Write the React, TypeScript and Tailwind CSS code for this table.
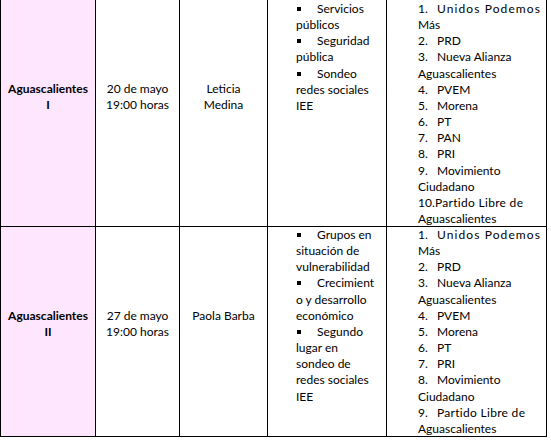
import React from "react";

function Bullet() {
  return (
    <span className="inline-block w-[21px]">
      <span className="inline-block w-[4px] h-[4px] bg-black ml-[1px] mb-[2px]"></span>
    </span>
  );
}

function Num({ n }: { n: string }) {
  return <span className="inline-block w-[19px] tracking-normal">{n}</span>;
}

function Num10() {
  return <span className="inline-block w-[17px]">10.</span>;
}

export default function App() {
  return (
    <div className="w-[551px] h-[440px] bg-white font-[Lato,sans-serif] text-[12px] leading-[16.15px] text-black">
      {/* Row 1 */}
      <div className="flex h-[227px] w-[547px] border-l border-b border-black">
        <div className="w-[95px] shrink-0 border-r border-black bg-[#ffe6ff] pt-[81px] text-center font-bold">
          <div>Aguascalientes</div>
          <div>I</div>
        </div>
        <div className="w-[84px] shrink-0 border-r border-black pt-[81px] text-center">
          <div>20 de mayo</div>
          <div>19:00 horas</div>
        </div>
        <div className="w-[88px] shrink-0 border-r border-black pt-[81px] text-center">
          <div>Leticia</div>
          <div>Medina</div>
        </div>
        <div className="w-[119px] shrink-0 border-r border-black pt-[1px] pl-[28px] whitespace-nowrap">
          <div><Bullet />Servicios</div>
          <div>públicos</div>
          <div><Bullet />Seguridad</div>
          <div>pública</div>
          <div><Bullet />Sondeo</div>
          <div>redes sociales</div>
          <div>IEE</div>
        </div>
        <div className="w-[160px] shrink-0 border-r border-black pt-[1px] pl-[31px] whitespace-nowrap">
          <div><Num n="1." /><span className="tracking-[1.1px]">Unidos Podemos</span></div>
          <div>Más</div>
          <div><Num n="2." />PRD</div>
          <div><Num n="3." />Nueva Alianza</div>
          <div>Aguascalientes</div>
          <div><Num n="4." />PVEM</div>
          <div><Num n="5." />Morena</div>
          <div><Num n="6." />PT</div>
          <div><Num n="7." />PAN</div>
          <div><Num n="8." />PRI</div>
          <div><Num n="9." />Movimiento</div>
          <div>Ciudadano</div>
          <div><Num10 /><span className="tracking-[0.3px]">Partido Libre de</span></div>
          <div>Aguascalientes</div>
        </div>
      </div>
      {/* Row 2 */}
      <div className="flex h-[210px] w-[547px] border-l border-b border-black">
        <div className="w-[95px] shrink-0 border-r border-black bg-[#ffe6ff] pt-[81px] text-center font-bold">
          <div>Aguascalientes</div>
          <div>II</div>
        </div>
        <div className="w-[84px] shrink-0 border-r border-black pt-[81px] text-center">
          <div>27 de mayo</div>
          <div>19:00 horas</div>
        </div>
        <div className="w-[88px] shrink-0 border-r border-black pt-[81px] text-center">
          <div>Paola Barba</div>
        </div>
        <div className="w-[119px] shrink-0 border-r border-black pt-0 pl-[28px] whitespace-nowrap">
          <div><Bullet />Grupos en</div>
          <div>situación de</div>
          <div>vulnerabilidad</div>
          <div><Bullet />Crecimient</div>
          <div>o y desarrollo</div>
          <div>económico</div>
          <div><Bullet />Segundo</div>
          <div>lugar en</div>
          <div>sondeo de</div>
          <div>redes sociales</div>
          <div>IEE</div>
        </div>
        <div className="w-[160px] shrink-0 border-r border-black pt-0 pl-[31px] whitespace-nowrap">
          <div><Num n="1." /><span className="tracking-[1.1px]">Unidos Podemos</span></div>
          <div>Más</div>
          <div><Num n="2." />PRD</div>
          <div><Num n="3." />Nueva Alianza</div>
          <div>Aguascalientes</div>
          <div><Num n="4." />PVEM</div>
          <div><Num n="5." />Morena</div>
          <div><Num n="6." />PT</div>
          <div><Num n="7." />PRI</div>
          <div><Num n="8." />Movimiento</div>
          <div>Ciudadano</div>
          <div><Num n="9." /><span className="tracking-[0.3px]">Partido Libre de</span></div>
          <div>Aguascalientes</div>
        </div>
      </div>
    </div>
  );
}
